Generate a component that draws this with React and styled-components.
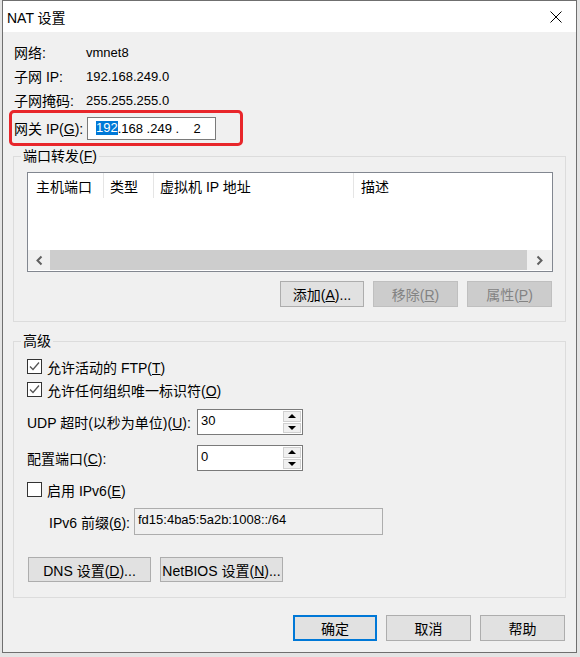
import React from "react";
import styled, { createGlobalStyle } from "styled-components";

const GlobalStyle = createGlobalStyle`
  html, body {
    margin: 0;
    padding: 0;
    background: #e4e4e4;
  }
  body {
    font-family: "Liberation Sans", "Noto Sans CJK SC", sans-serif;
    font-size: 14px;
    color: #000;
  }
  * {
    box-sizing: border-box;
  }
`;

const Page = styled.div`
  padding-left: 2px;
  height: 657px;
  overflow: hidden;
`;

const Window = styled.div`
  width: 575px;
  border: 1px solid #6f6f6f;
  background: #f0f0f0;
`;

const TitleBar = styled.div`
  height: 31px;
  background: #fff;
  display: flex;
  align-items: center;
  justify-content: space-between;
  padding: 0 14px 0 4px;
  font-size: 14px;
`;

const Body = styled.div`
  padding: 8px 10px 11px;
`;

const InfoRow = styled.div`
  display: grid;
  grid-template-columns: 72px 1fr;
  align-items: center;
  height: 24px;
  padding-left: 1px;
`;

const Value = styled.span`
  font-size: 13px;
`;

const Highlight = styled.div`
  width: 234px;
  height: 36px;
  margin: -2px 0 0 -4px;
  border: 3px solid #e8262b;
  border-radius: 5px;
  display: flex;
  align-items: center;
  padding-left: 2px;
`;

const GatewayLabel = styled.span`
  width: 73px;
`;

const IpBox = styled.div`
  width: 129px;
  height: 23px;
  border: 1px solid #7a7a7a;
  background: #fff;
  display: flex;
  align-items: center;
  padding-left: 8px;
  font-size: 13px;
  white-space: pre;
`;

const Selected = styled.span`
  background: #0078d7;
  color: #fff;
  line-height: 14px;
`;

const U = styled.span`
  text-decoration: underline;
`;

const Group = styled.fieldset`
  margin: ${(p) => p.$top}px 0 0;
  padding: 0;
  border: 1px solid #dcdcdc;
  min-width: 0;
`;

const Legend = styled.legend`
  margin-left: 7px;
  padding: 0 2px;
  line-height: 16px;
  font-size: 14px;
`;

const GroupBody = styled.div`
  padding: ${(p) => p.$pad};
`;

const ListView = styled.div`
  height: 100px;
  border: 1px solid #828790;
  background: #fff;
  display: flex;
  flex-direction: column;
`;

const HeaderRow = styled.div`
  display: flex;
  height: 25px;
`;

const HeaderCell = styled.div`
  width: ${(p) => (p.$w ? `${p.$w}px` : "auto")};
  flex: ${(p) => (p.$w ? "none" : 1)};
  padding-left: ${(p) => p.$pl}px;
  border-right: ${(p) => (p.$w ? "1px solid #e5e5e5" : "none")};
  display: flex;
  align-items: center;
`;

const ListSpace = styled.div`
  flex: 1;
`;

const ScrollBar = styled.div`
  height: 20px;
  display: flex;
  margin-bottom: 1px;
`;

const ScrollArrow = styled.div`
  width: ${(p) => p.$w}px;
  background: #f0f0f0;
  display: flex;
  align-items: center;
  justify-content: center;
`;

const ScrollThumb = styled.div`
  flex: 1;
  background: #cdcdcd;
`;

const ButtonRow = styled.div`
  display: flex;
  justify-content: ${(p) => (p.$left ? "flex-start" : "flex-end")};
  gap: ${(p) => p.$gap || 9}px;
  margin-top: ${(p) => p.$top}px;
  padding: 0 ${(p) => (p.$left ? 0 : 1)}px 0 ${(p) => (p.$left ? 1 : 0)}px;
`;

const Btn = styled.button`
  width: ${(p) => p.$w || 85}px;
  height: ${(p) => p.$h || 26}px;
  padding: 0;
  font: inherit;
  font-size: 14px;
  background: ${(p) => (p.disabled ? "#cccccc" : "#e1e1e1")};
  color: ${(p) => (p.disabled ? "#838383" : "#000")};
  border: ${(p) =>
    p.$default
      ? "2px solid #0078d7"
      : p.disabled
      ? "1px solid #bfbfbf"
      : "1px solid #adadad"};
`;

const CheckRow = styled.div`
  display: flex;
  align-items: center;
  gap: 5px;
  height: 23px;
  margin-top: ${(p) => p.$top || 0}px;
`;

const Box = styled.span`
  width: 15px;
  height: 15px;
  border: 1px solid #333;
  background: #fff;
  display: flex;
  align-items: center;
  justify-content: center;
`;

const FieldRow = styled.div`
  display: flex;
  align-items: center;
  margin-top: ${(p) => p.$top}px;
  padding-left: ${(p) => p.$indent || 0}px;
`;

const FieldLabel = styled.span`
  width: ${(p) => p.$w}px;
`;

const Spinner = styled.div`
  width: 106px;
  height: 26px;
  border: 1px solid #7a7a7a;
  background: #fff;
  display: flex;
`;

const SpinText = styled.div`
  flex: 1;
  padding: 3px 0 0 3px;
  font-size: 13px;
`;

const SpinButtons = styled.div`
  width: 19px;
  display: flex;
  flex-direction: column;
  gap: 1px;
  padding: 1px 1px 1px 0;
`;

const SpinHalf = styled.div`
  flex: 1;
  background: #f0f0f0;
  border: 1px solid #d0d0d0;
  display: flex;
  align-items: center;
  justify-content: center;
`;

const Tri = styled.span`
  width: 0;
  height: 0;
  border-left: 4px solid transparent;
  border-right: 4px solid transparent;
  ${(p) =>
    p.$down ? "border-top: 4px solid #000;" : "border-bottom: 4px solid #000;"}
`;

const PrefixBox = styled.div`
  width: 249px;
  height: 27px;
  border: 1px solid #adadad;
  background: #f0f0f0;
  padding: 3px 0 0 3px;
  font-size: 13px;
`;

const Check = () => (
  <svg width="13" height="13" viewBox="0 0 13 13">
    <path d="M2 6.5 L5 9.5 L11 2.5" fill="none" stroke="#555" strokeWidth="1.3" />
  </svg>
);

const CheckBox = ({ checked, top, children }) => (
  <CheckRow $top={top}>
    <Box>{checked && <Check />}</Box>
    <span>{children}</span>
  </CheckRow>
);

const Spin = ({ value }) => (
  <Spinner>
    <SpinText>{value}</SpinText>
    <SpinButtons>
      <SpinHalf>
        <Tri />
      </SpinHalf>
      <SpinHalf>
        <Tri $down />
      </SpinHalf>
    </SpinButtons>
  </Spinner>
);

const Chevron = ({ right }) => (
  <svg width="7" height="11" viewBox="0 0 7 11">
    <path
      d={right ? "M1.5 1.5 L5.5 5.5 L1.5 9.5" : "M5.5 1.5 L1.5 5.5 L5.5 9.5"}
      fill="none"
      stroke="#606060"
      strokeWidth="2"
    />
  </svg>
);

const CloseIcon = () => (
  <svg width="12" height="12" viewBox="0 0 12 12">
    <path d="M0.5 0.5 L11.5 11.5 M11.5 0.5 L0.5 11.5" stroke="#000" strokeWidth="1" />
  </svg>
);

export default function App() {
  return (
    <>
      <GlobalStyle />
      <Page>
        <Window>
          <TitleBar>
            <span>NAT 设置</span>
            <CloseIcon />
          </TitleBar>
          <Body>
            <InfoRow>
              <span>网络:</span>
              <Value>vmnet8</Value>
            </InfoRow>
            <InfoRow>
              <span>子网 IP:</span>
              <Value>192.168.249.0</Value>
            </InfoRow>
            <InfoRow>
              <span>子网掩码:</span>
              <Value>255.255.255.0</Value>
            </InfoRow>
            <Highlight>
              <GatewayLabel>
                网关 IP(<U>G</U>):
              </GatewayLabel>
              <IpBox>
                <Selected>192</Selected>
                {".168 .249 .    2"}
              </IpBox>
            </Highlight>

            <Group $top={2}>
              <Legend>
                端口转发(<U>F</U>)
              </Legend>
              <GroupBody $pad="8px 12px 14px 13px">
                <ListView>
                  <HeaderRow>
                    <HeaderCell $w={76} $pl={8}>主机端口</HeaderCell>
                    <HeaderCell $w={50} $pl={6}>类型</HeaderCell>
                    <HeaderCell $w={200} $pl={6}>虚拟机 IP 地址</HeaderCell>
                    <HeaderCell $pl={7}>描述</HeaderCell>
                  </HeaderRow>
                  <ListSpace />
                  <ScrollBar>
                    <ScrollArrow $w={22}>
                      <Chevron />
                    </ScrollArrow>
                    <ScrollThumb />
                    <ScrollArrow $w={25}>
                      <Chevron right />
                    </ScrollArrow>
                  </ScrollBar>
                </ListView>
                <ButtonRow $top={9}>
                  <Btn $w={84}>
                    添加(<U>A</U>)...
                  </Btn>
                  <Btn disabled>
                    移除(<U>R</U>)
                  </Btn>
                  <Btn disabled>
                    属性(<U>P</U>)
                  </Btn>
                </ButtonRow>
              </GroupBody>
            </Group>

            <Group $top={11}>
              <Legend>高级</Legend>
              <GroupBody $pad="6px 12px 15px 13px">
                <CheckBox checked>
                  允许活动的 FTP(<U>T</U>)
                </CheckBox>
                <CheckBox checked>
                  允许任何组织唯一标识符(<U>O</U>)
                </CheckBox>
                <FieldRow $top={8}>
                  <FieldLabel $w={170}>
                    UDP 超时(以秒为单位)(<U>U</U>):
                  </FieldLabel>
                  <Spin value="30" />
                </FieldRow>
                <FieldRow $top={10}>
                  <FieldLabel $w={170}>
                    配置端口(<U>C</U>):
                  </FieldLabel>
                  <Spin value="0" />
                </FieldRow>
                <CheckBox top={7}>
                  启用 IPv6(<U>E</U>)
                </CheckBox>
                <FieldRow $top={7} $indent={22}>
                  <FieldLabel $w={85}>
                    IPv6 前缀(<U>6</U>):
                  </FieldLabel>
                  <PrefixBox>fd15:4ba5:5a2b:1008::/64</PrefixBox>
                </FieldRow>
                <ButtonRow $left $top={22}>
                  <Btn $w={123} $h={25}>
                    DNS 设置(<U>D</U>)...
                  </Btn>
                  <Btn $w={123} $h={25}>
                    NetBIOS 设置(<U>N</U>)...
                  </Btn>
                </ButtonRow>
              </GroupBody>
            </Group>

            <ButtonRow $top={17} $gap={9}>
              <Btn $w={84} $default>
                确定
              </Btn>
              <Btn>取消</Btn>
              <Btn>帮助</Btn>
            </ButtonRow>
          </Body>
        </Window>
      </Page>
    </>
  );
}
